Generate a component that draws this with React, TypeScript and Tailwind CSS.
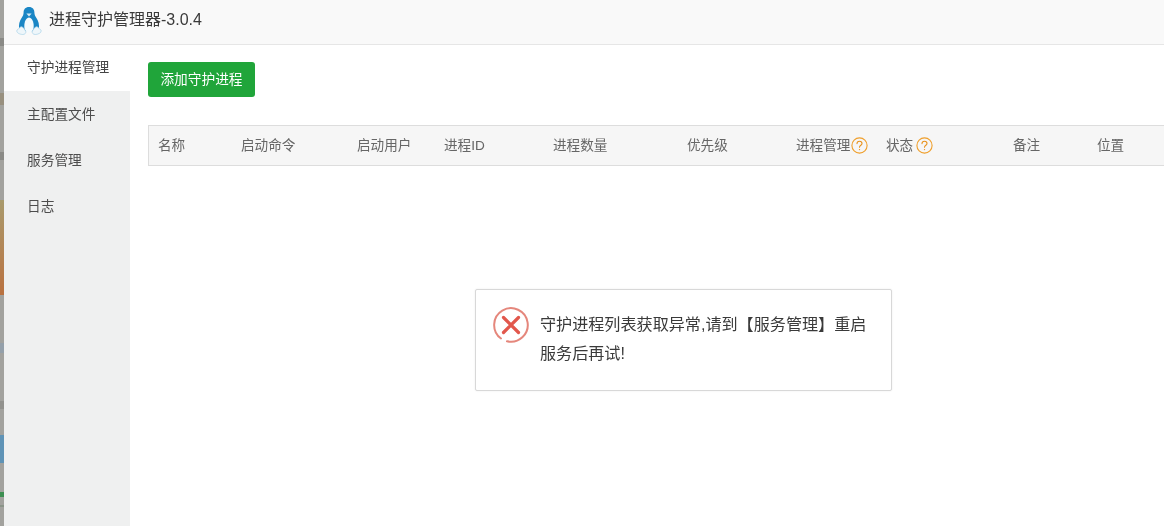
import { ReactNode } from "react";

const menu = ["守护进程管理", "主配置文件", "服务管理", "日志"];

const columns: { label: string; width: string; tip?: boolean }[] = [
  { label: "名称", width: "w-[83px]" },
  { label: "启动命令", width: "w-[116px]" },
  { label: "启动用户", width: "w-[87px]" },
  { label: "进程ID", width: "w-[109px]" },
  { label: "进程数量", width: "w-[134px]" },
  { label: "优先级", width: "w-[109px]" },
  { label: "进程管理", width: "w-[90px]", tip: true },
  { label: "状态", width: "w-[127px]", tip: true },
  { label: "备注", width: "w-[84px]" },
  { label: "位置", width: "w-[60px]" },
];

function Penguin() {
  return (
    <svg width="26" height="30" viewBox="0 0 26 30" className="shrink-0">
      <path
        d="M13 1C9.400 1 7.600 3.400 7.600 6.600c0 2.200-.8 3.600-2.200 5.600C3.600 15 2.400 18.500 3.200 23.500c2 2.500 17.600 2.500 19.600 0 .8-5-.4-8.500-2.200-11.300-1.400-2-2.200-3.400-2.200-5.600C18.400 3.400 16.600 1 13 1z"
        fill="#1a86c5"
      />
      <path
        d="M13 11.500c-2.600 0-4.700 4-4.700 8.500 0 4 1.600 6.500 4.700 6.500s4.700-2.500 4.700-6.500c0-4.500-2.100-8.500-4.700-8.500z"
        fill="#f4fafd"
      />
      <path d="M10.400 7.400h5.200L13 10.600z" fill="#d8ebf5" />
      <path
        d="M.8 25c0-1.800 1.800-2 2.800-3.200.8-1 2-1.400 3-.6 1.400 1 2.400 2.600 3 4 .8 1.700-.8 3.300-2.800 3.300-2.600 0-6-1.400-6-3.500z"
        fill="#eef6fa"
        stroke="#a9d2e8"
        strokeWidth="0.7"
      />
      <path
        d="M25.200 25c0-1.800-1.800-2-2.800-3.200-.8-1-2-1.400-3-.6-1.400 1-2.400 2.600-3 4-.8 1.700.8 3.300 2.800 3.300 2.600 0 6-1.400 6-3.500z"
        fill="#eef6fa"
        stroke="#a9d2e8"
        strokeWidth="0.7"
      />
    </svg>
  );
}

function ErrorIcon() {
  return (
    <svg width="36" height="36" viewBox="0 0 36 36" className="shrink-0">
      <path
        d="M8 31.500A16.800 16.800 0 1 1 14 34.300"
        fill="none"
        stroke="#e5877c"
        strokeWidth="2"
        strokeLinecap="round"
      />
      <path
        d="M10.500 10.500l15 15M25.500 10.500l-15 15"
        stroke="#e2574c"
        strokeWidth="3.200"
        strokeLinecap="round"
      />
    </svg>
  );
}

function Tip({ wide }: { wide: boolean }) {
  return (
    <svg
      width="17"
      height="17"
      viewBox="0 0 17 17"
      fill="none"
      className={wide ? "ml-[3px] shrink-0" : "ml-px shrink-0"}
    >
      <circle cx="8.500" cy="8.500" r="7.600" stroke="#ef9f2c" strokeWidth="1.100" />
      <path
        d="M6 6.600c0-1.500 1.100-2.400 2.500-2.400s2.500.9 2.500 2.200c0 1.800-2.500 1.900-2.500 3.900"
        stroke="#e8921c"
        strokeWidth="1.100"
        strokeLinecap="round"
      />
      <circle cx="8.500" cy="12.600" r="0.700" fill="#e8921c" />
    </svg>
  );
}

function Strip({ className, children }: { className: string; children?: ReactNode }) {
  return <div className={className}>{children}</div>;
}

export default function App() {
  return (
    <div className="flex h-[526px] w-[1164px] overflow-hidden bg-white font-['Liberation_Sans','Noto_Sans_CJK_SC',sans-serif] blur-[0.3px]">
      {/* page showing behind the panel */}
      <div className="flex w-[4px] shrink-0 flex-col bg-[#a2a29e]">
        <Strip className="mt-[38px] h-[8px] bg-[#8a8a86]" />
        <Strip className="mt-[47px] h-[12px] bg-[#98907f]" />
        <Strip className="mt-[47px] h-[8px] bg-[#8a8a86]" />
        <Strip className="mt-[40px] h-[95px] bg-gradient-to-b from-[#a89a6c] to-[#b9713f]" />
        <Strip className="mt-[48px] h-[10px] bg-[#94a0aa]" />
        <Strip className="mt-[48px] h-[8px] bg-[#92928e]" />
        <Strip className="mt-[26px] h-[28px] bg-[#5f93b6]" />
        <Strip className="mt-[29px] h-[5px] bg-[#3d8f52]" />
        <Strip className="mt-[8px] h-[2px] bg-[#8a9488]" />
      </div>

      <div className="flex min-w-0 flex-1 flex-col">
        <header className="flex h-[45px] shrink-0 items-center gap-[7px] border-b border-[#e6e6e6] bg-[#f9f9f9] pb-[3px] pl-[12px]">
          <Penguin />
          <span className="-mt-[2px] text-[16px] text-[#3a3a3a]">进程守护管理器-3.0.4</span>
        </header>

        <div className="flex flex-1">
          <nav className="w-[126px] shrink-0 bg-[#eff0f0]">
            {menu.map((item, i) => (
              <div
                key={item}
                className={
                  i === 0
                    ? "flex h-[46px] items-center bg-white pl-[23px] pt-[1px] text-[13.700px] text-[#444]"
                    : "flex h-[46px] items-center pl-[23px] pt-[2px] text-[13.700px] text-[#4d4d4d]"
                }
              >
                {item}
              </div>
            ))}
          </nav>

          <main className="min-w-0 flex-1 overflow-hidden pl-[18px] pt-[17px]">
            <button className="flex h-[35px] w-[107px] items-center justify-center rounded-[3px] bg-[#20a53a] pt-[1px] text-[13.700px] text-white">
              添加守护进程
            </button>
            <div className="mt-[28px] flex h-[41px] w-[1030px] items-center border border-[#dddddd] bg-[#f6f6f6] pl-[9px] pt-[1px] text-[13.600px] text-[#666]">
              {columns.map((col) => (
                <div key={col.label} className={`${col.width} flex shrink-0 items-center`}>
                  {col.label}
                  {col.tip && <Tip wide={col.label === "状态"} />}
                </div>
              ))}
            </div>
          </main>
        </div>
      </div>

      {/* error toast */}
      <div className="absolute left-[475px] top-[289px] flex h-[102px] w-[417px] gap-[11px] rounded-[2px] border border-[#d8d8d8] bg-white pl-[17px] pt-[17px] shadow-[0_0_2px_rgba(0,0,0,0.08)]">
        <ErrorIcon />
        <p className="mt-[3px] w-[340px] text-[16.100px] leading-[29px] text-[#3a3a3a]">
          守护进程列表获取异常,请到【服务管理】重启服务后再试!
        </p>
      </div>
    </div>
  );
}
